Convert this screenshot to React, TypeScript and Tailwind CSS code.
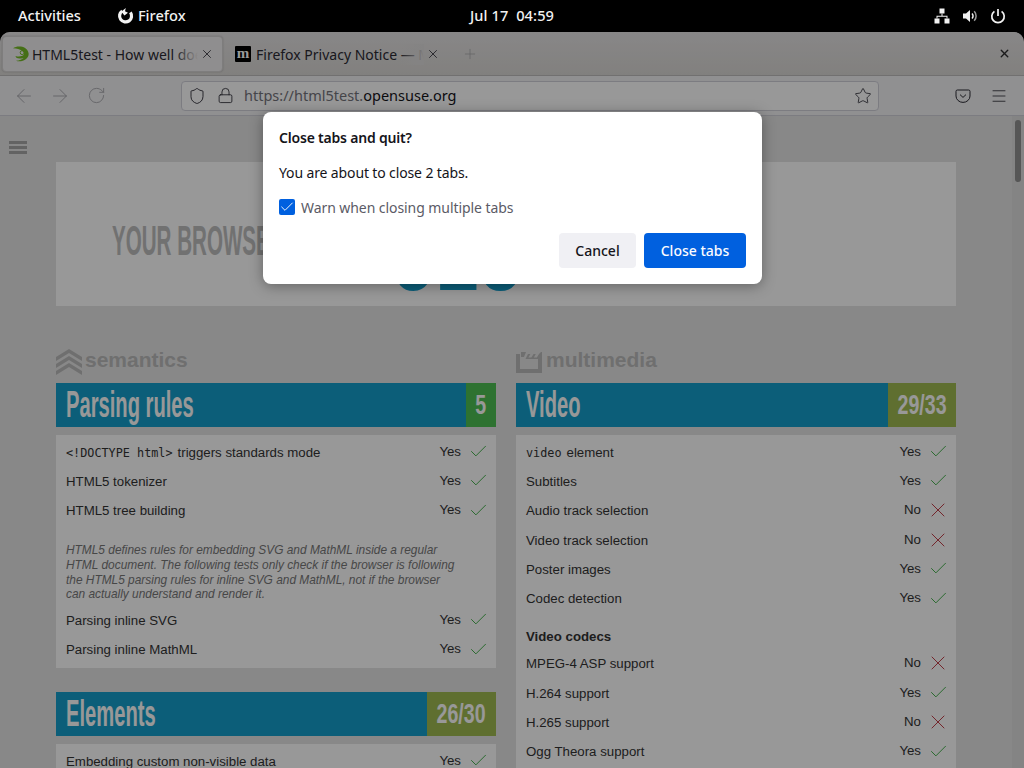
import { ArrowLeft, ArrowRight, Check, Lock, Menu, Plus, RotateCw, Shield, Star, X } from 'lucide-react';

const uiFont = "font-['Noto_Sans',sans-serif]";

type Row = { label: string; code?: string; yes: boolean };

function FirefoxGlyph() {
  return (
    <svg width="18" height="18" viewBox="0 0 18 18" fill="none">
      <path d="M6.2 4A6 6 0 1 0 14.4 5.4" stroke="#f2f2f2" strokeWidth="3.2" />
      <path d="M5.4 4.6 9.8 1 9 4.2 12 5.8 8.4 8.6Z" fill="#f2f2f2" />
    </svg>
  );
}

function SuseIcon() {
  return (
    <svg width="18" height="18" viewBox="0 0 18 18" fill="none">
      <path d="M1 3.2C5 0.6 15 0.4 16.6 8.2 17.4 13.6 10 17.8 4 15.8 7.5 15.4 10 14.6 11.6 13 5.5 14.6 3.4 12.4 3.6 11 6 12 10 11.8 12 9.6 12.6 6.6 9 3.8 1 3.2Z" fill="#73ba25" />
      <circle cx="10.2" cy="7.6" r="2" stroke="#73ba25" strokeWidth="1" />
    </svg>
  );
}

function NetworkIcon() {
  return (
    <svg width="16" height="16" viewBox="0 0 16 16" fill="#f2f2f2">
      <rect x="5.5" y="0.5" width="5" height="5" />
      <rect x="0.5" y="10.5" width="5" height="5" />
      <rect x="10.5" y="10.5" width="5" height="5" />
      <path d="M7.5 5.5h1v2.2h5v2.8h-1V8.7h-9v1.8h-1V7.7h5Z" />
    </svg>
  );
}

function VolumeIcon() {
  return (
    <svg width="16" height="16" viewBox="0 0 16 16" fill="none">
      <path d="M1 5.5h3L8 2v12l-4-3.5H1Z" fill="#f2f2f2" />
      <path d="M10 5.5a3.5 3.5 0 0 1 0 5" stroke="#f2f2f2" strokeWidth="1.5" />
      <path d="M12.2 3.2a7 7 0 0 1 0 9.6" stroke="#9a9a9a" strokeWidth="1.5" />
    </svg>
  );
}

function PowerIcon() {
  return (
    <svg width="16" height="16" viewBox="0 0 16 16" fill="none" stroke="#f2f2f2" strokeWidth="1.7">
      <path d="M8 1v7" />
      <path d="M4.4 3.4a6.2 6.2 0 1 0 7.2 0" />
    </svg>
  );
}

function PocketIcon() {
  return (
    <svg width="16" height="16" viewBox="0 0 16 16" fill="none" stroke="#2b2a33" strokeWidth="1">
      <path d="M2.4 2h11.2A1.4 1.4 0 0 1 15 3.4V8A7 6.4 0 0 1 1 8V3.4A1.4 1.4 0 0 1 2.4 2Z" />
      <path d="M5 6.6 8 9.4l3-2.8" />
    </svg>
  );
}

function StackIcon() {
  return (
    <svg width="26" height="26" viewBox="0 0 26 26" fill="#b9b9b9">
      <path d="M13 0 26 8v4L13 4 0 12V8Z" />
      <path d="M13 7 26 15v4L13 11 0 19v-4Z" />
      <path d="M13 14 26 22v4L13 18 0 26v-4Z" />
    </svg>
  );
}

function ClapperIcon() {
  return (
    <svg width="26" height="21" viewBox="0 0 26 21" fill="#b9b9b9">
      <path d="M0 2h4v15h18V7H9.5L12 2h2.4l-2 3.6h3L17.6 2h2.2l-2 3.6h3L23 2 25 0h1v21H0Z" />
      <path d="M5 0h5L8 5H5Z" />
    </svg>
  );
}

function ResultRow({ label, code, yes }: Row) {
  return (
    <div className="flex h-[29.3px] items-center justify-between">
      <span className="text-[13.25px] text-[#333]">
        {code && <code className="mr-[5px] font-['DejaVu_Sans_Mono',monospace] text-[11.8px]">{code}</code>}
        {label}
      </span>
      <span className="flex items-center">
        <span className="-mt-[2px] text-[13.25px] text-[#333]">{yes ? 'Yes' : 'No'}</span>
        <span className="ml-[9px] -mt-[2px] flex w-[16px] justify-center">
          {yes ? (
            <Check size={21} strokeWidth={1.1} className="flex-none text-[#3fae47]" />
          ) : (
            <X size={24} strokeWidth={1} className="flex-none text-[#c23f49]" />
          )}
        </span>
      </span>
    </div>
  );
}

function SectionBar({ title, score, scoreBg, scoreWidth }: { title: string; score: string; scoreBg: string; scoreWidth: string }) {
  return (
    <div className="flex h-[44px] items-stretch bg-[#149dca] font-bold text-[#fdfdfd]">
      <div className="flex flex-1 items-center overflow-hidden pl-[10px] text-[36px]">
        <span className="origin-left scale-x-[0.56] whitespace-nowrap">{title}</span>
      </div>
      <div className={`flex flex-none items-center justify-center overflow-hidden text-[28px] ${scoreWidth} ${scoreBg}`}>
        <span className="scale-x-[0.7] whitespace-nowrap">{score}</span>
      </div>
    </div>
  );
}

const parsingTop: Row[] = [
  { code: '<!DOCTYPE html>', label: 'triggers standards mode', yes: true },
  { label: 'HTML5 tokenizer', yes: true },
  { label: 'HTML5 tree building', yes: true },
];

const parsingBottom: Row[] = [
  { label: 'Parsing inline SVG', yes: true },
  { label: 'Parsing inline MathML', yes: true },
];

const videoTop: Row[] = [
  { code: 'video', label: 'element', yes: true },
  { label: 'Subtitles', yes: true },
  { label: 'Audio track selection', yes: false },
  { label: 'Video track selection', yes: false },
  { label: 'Poster images', yes: true },
  { label: 'Codec detection', yes: true },
];

const videoCodecs: Row[] = [
  { label: 'MPEG-4 ASP support', yes: false },
  { label: 'H.264 support', yes: true },
  { label: 'H.265 support', yes: false },
  { label: 'Ogg Theora support', yes: true },
  { label: 'Google VP8 support', yes: true },
];

function TopBar() {
  return (
    <div className={`grid h-[32px] flex-none grid-cols-[1fr_auto_1fr] items-center bg-black pl-[18px] pr-[18px] text-[14.6px] font-medium text-[#f2f2f2] ${uiFont}`}>
      <div className="flex items-center">
        <span>Activities</span>
        <span className="ml-[35px] flex items-center gap-[4px]">
          <FirefoxGlyph />
          Firefox
        </span>
      </div>
      <div className="tracking-[0.1px]">Jul 17&nbsp;&nbsp;04:59</div>
      <div className="flex items-center justify-end gap-[12px]">
        <NetworkIcon />
        <VolumeIcon />
        <PowerIcon />
      </div>
    </div>
  );
}

function TabBar() {
  return (
    <div className={`flex h-[44px] flex-none items-center border-b border-[#bdbbbb] bg-gradient-to-b from-[#e3e1e2] to-[#d8d6d3] pl-[2px] pr-[13px] text-[14px] text-[#2b2a33] ${uiFont}`}>
      <div className="flex h-[36px] w-[221px] flex-none items-center rounded-[4px] border border-[#d2d0d0] bg-[#efedee] pl-[9px] pr-[8px] shadow-[0_0_2px_rgba(0,0,0,0.2)]">
        <SuseIcon />
        <span className="relative ml-[2px] mt-[1px] flex-1 overflow-hidden whitespace-nowrap">
          HTML5test - How well does your browser support
          <span className="absolute inset-y-0 right-0 w-[24px] bg-gradient-to-r from-transparent to-[#efedee]" />
        </span>
        <X size={14} strokeWidth={1.4} className="ml-[2px] flex-none" />
      </div>
      <div className="ml-[9px] flex h-[36px] w-[216px] flex-none items-center pl-[3px] pr-[8px]">
        <span className="flex h-[16px] w-[16px] flex-none items-center justify-center rounded-[1px] bg-black font-['Liberation_Serif',serif] text-[15px] font-bold leading-none text-white">
          m
        </span>
        <span className="relative ml-[5px] mt-[1px] flex-1 overflow-hidden whitespace-nowrap">
          Firefox Privacy Notice — Mozilla
          <span className="absolute inset-y-0 right-0 w-[24px] bg-gradient-to-r from-transparent to-[#dddbdb]" />
        </span>
        <X size={14} strokeWidth={1.4} className="ml-[2px] flex-none" />
      </div>
      <Plus size={16} strokeWidth={1.1} className="ml-[14px] text-[#a5a4a8]" />
      <div className="flex-1" />
      <X size={13} strokeWidth={2.6} className="text-[#2e2e2e]" />
    </div>
  );
}

function NavBar() {
  return (
    <div className={`flex h-[40px] flex-none items-center border-b border-[#cfcfd8] bg-[#f0f0f2] pl-[13px] pr-[16px] ${uiFont}`}>
      <ArrowLeft size={22} strokeWidth={1} className="flex-none text-[#a3a3a8]" />
      <ArrowRight size={22} strokeWidth={1} className="ml-[14px] flex-none text-[#a3a3a8]" />
      <RotateCw size={19} strokeWidth={1.1} className="ml-[15.5px] flex-none text-[#a3a3a8]" />
      <div className="ml-[75.5px] flex h-[30px] w-[698px] flex-none items-center rounded-[4px] border border-[#cfcfd8] bg-[#fdfdfe] pl-[6px] pr-[6px] text-[14.5px]">
        <Shield size={18} strokeWidth={1.2} className="flex-none text-[#2b2a33]" />
        <Lock size={17} strokeWidth={1.2} className="ml-[10.5px] flex-none text-[#2b2a33]" />
        <span className="ml-[10.5px] mt-[1px] flex-1 text-[#74747b]">
          https://html5test.<span className="text-[#15141a]">opensuse.org</span>
        </span>
        <Star size={18} strokeWidth={1.1} className="flex-none text-[#2b2a33]" />
      </div>
      <div className="flex-1" />
      <PocketIcon />
      <Menu size={18} strokeWidth={1.1} className="ml-[19px] text-[#2b2a33]" />
    </div>
  );
}

function Hero() {
  return (
    <div className="flex h-[144px] items-start overflow-hidden bg-[#fdfdfe] pl-[56px] text-[#bcbcbc]">
      <div className="mt-[56px] w-[280px] flex-none text-[42px] font-bold leading-[46px]">
        <span className="block origin-left scale-x-[0.49] whitespace-nowrap">YOUR BROWSER SCORES</span>
      </div>
      <div className="mt-[28px] w-[130px] flex-none text-[118px] font-bold leading-[118px] text-[#149dca]">
        <span className="block origin-left scale-x-[0.66]">518</span>
      </div>
    </div>
  );
}

function QuitDialog() {
  return (
    <div className={`absolute left-[263px] top-[80px] flex h-[172px] w-[499px] flex-col rounded-[8px] bg-white pl-[16px] pr-[16px] pt-[16px] text-[14px] text-[#15141a] shadow-[0_2px_14px_rgba(0,0,0,0.35)] ${uiFont}`}>
      <div className="text-[14px] font-semibold leading-[20px] tracking-[-0.2px]">Close tabs and quit?</div>
      <div className="mt-[15px] leading-[20px] tracking-[-0.13px]">You are about to close 2 tabs.</div>
      <label className="mt-[14px] flex h-[20px] items-center text-[#5b5b66]">
        <span className="flex h-[16px] w-[16px] items-center justify-center rounded-[2px] bg-[#0060df]">
          <Check size={16} strokeWidth={1.4} className="text-white" />
        </span>
        <span className="ml-[6px] tracking-[-0.07px]">Warn when closing multiple tabs</span>
      </label>
      <div className="mt-[16px] flex justify-end gap-[8px] font-medium">
        <button className="h-[35px] w-[77px] rounded-[4px] bg-[#f0f0f4] text-[#15141a]">Cancel</button>
        <button className="h-[35px] w-[102px] rounded-[4px] bg-[#0060df] text-[#fbfbfe]">Close tabs</button>
      </div>
    </div>
  );
}

export default function App() {
  return (
    <div className="flex h-[768px] w-[1024px] flex-col overflow-hidden bg-black font-['Liberation_Sans',sans-serif]">
      <TopBar />
      <div className="relative flex min-h-0 flex-1 flex-col overflow-hidden rounded-t-[10px]">
        <TabBar />
        <NavBar />
        <div className="flex min-h-0 flex-1 overflow-hidden bg-[#e3e3e3]">
          <div className="w-[56px] flex-none pl-[9px] pt-[25px]">
            <div className="flex w-[18px] flex-col gap-[2.5px]">
              <div className="h-[2.5px] bg-[#a6a6a6]" />
              <div className="h-[2.5px] bg-[#a6a6a6]" />
              <div className="h-[2.5px] bg-[#a6a6a6]" />
            </div>
          </div>
          <div className="w-[900px] flex-none pt-[46px]">
            <Hero />
            <div className="mt-[43px] grid grid-cols-2 gap-[20px]">
              <div>
                <div className="mb-[8px] flex h-[26px] items-center gap-[3px] text-[21px] font-bold text-[#b9b9b9]">
                  <StackIcon />
                  <span className="-mt-[4px]">semantics</span>
                </div>
                <SectionBar title="Parsing rules" score="5" scoreBg="bg-[#4dbf53]" scoreWidth="w-[30px]" />
                <div className="mt-[8px] bg-[#fdfdfe] px-[10px] py-[3px]">
                  {parsingTop.map((r) => (
                    <ResultRow key={r.label} {...r} />
                  ))}
                  <p className="mb-[4.5px] mt-[17.5px] max-w-[395px] text-[11.9px] italic leading-[14.6px] text-[#777]">
                    HTML5 defines rules for embedding SVG and MathML inside a regular HTML document. The following tests only check if the browser is following the HTML5 parsing rules for inline SVG and MathML, not if the browser can actually understand and render it.
                  </p>
                  {parsingBottom.map((r) => (
                    <ResultRow key={r.label} {...r} />
                  ))}
                </div>
                <div className="mt-[24px]">
                  <SectionBar title="Elements" score="26/30" scoreBg="bg-[#9fb950]" scoreWidth="w-[69px]" />
                </div>
                <div className="mt-[8px] bg-[#fdfdfe] px-[10px] py-[3px]">
                  <ResultRow label="Embedding custom non-visible data" yes />
                </div>
              </div>
              <div>
                <div className="mb-[8px] flex h-[26px] items-center gap-[4px] text-[21px] font-bold text-[#b9b9b9]">
                  <ClapperIcon />
                  <span className="-mt-[4px]">multimedia</span>
                </div>
                <SectionBar title="Video" score="29/33" scoreBg="bg-[#9fb950]" scoreWidth="w-[68px]" />
                <div className="mt-[8px] bg-[#fdfdfe] px-[10px] py-[3px]">
                  {videoTop.map((r) => (
                    <ResultRow key={r.label} {...r} />
                  ))}
                  <div className="mt-[10px] flex h-[26px] items-center text-[13.25px] font-bold text-[#333]">Video codecs</div>
                  {videoCodecs.map((r) => (
                    <ResultRow key={r.label} {...r} />
                  ))}
                </div>
              </div>
            </div>
          </div>
          <div className="flex-1" />
          <div className="w-[12px] flex-none bg-[#dcdcdc] pl-[3px] pt-[4px]">
            <div className="h-[62px] w-[6px] rounded-full bg-[#8f8f8f]" />
          </div>
        </div>
        <div className="pointer-events-none absolute inset-0 bg-black/40" />
        <QuitDialog />
      </div>
    </div>
  );
}
